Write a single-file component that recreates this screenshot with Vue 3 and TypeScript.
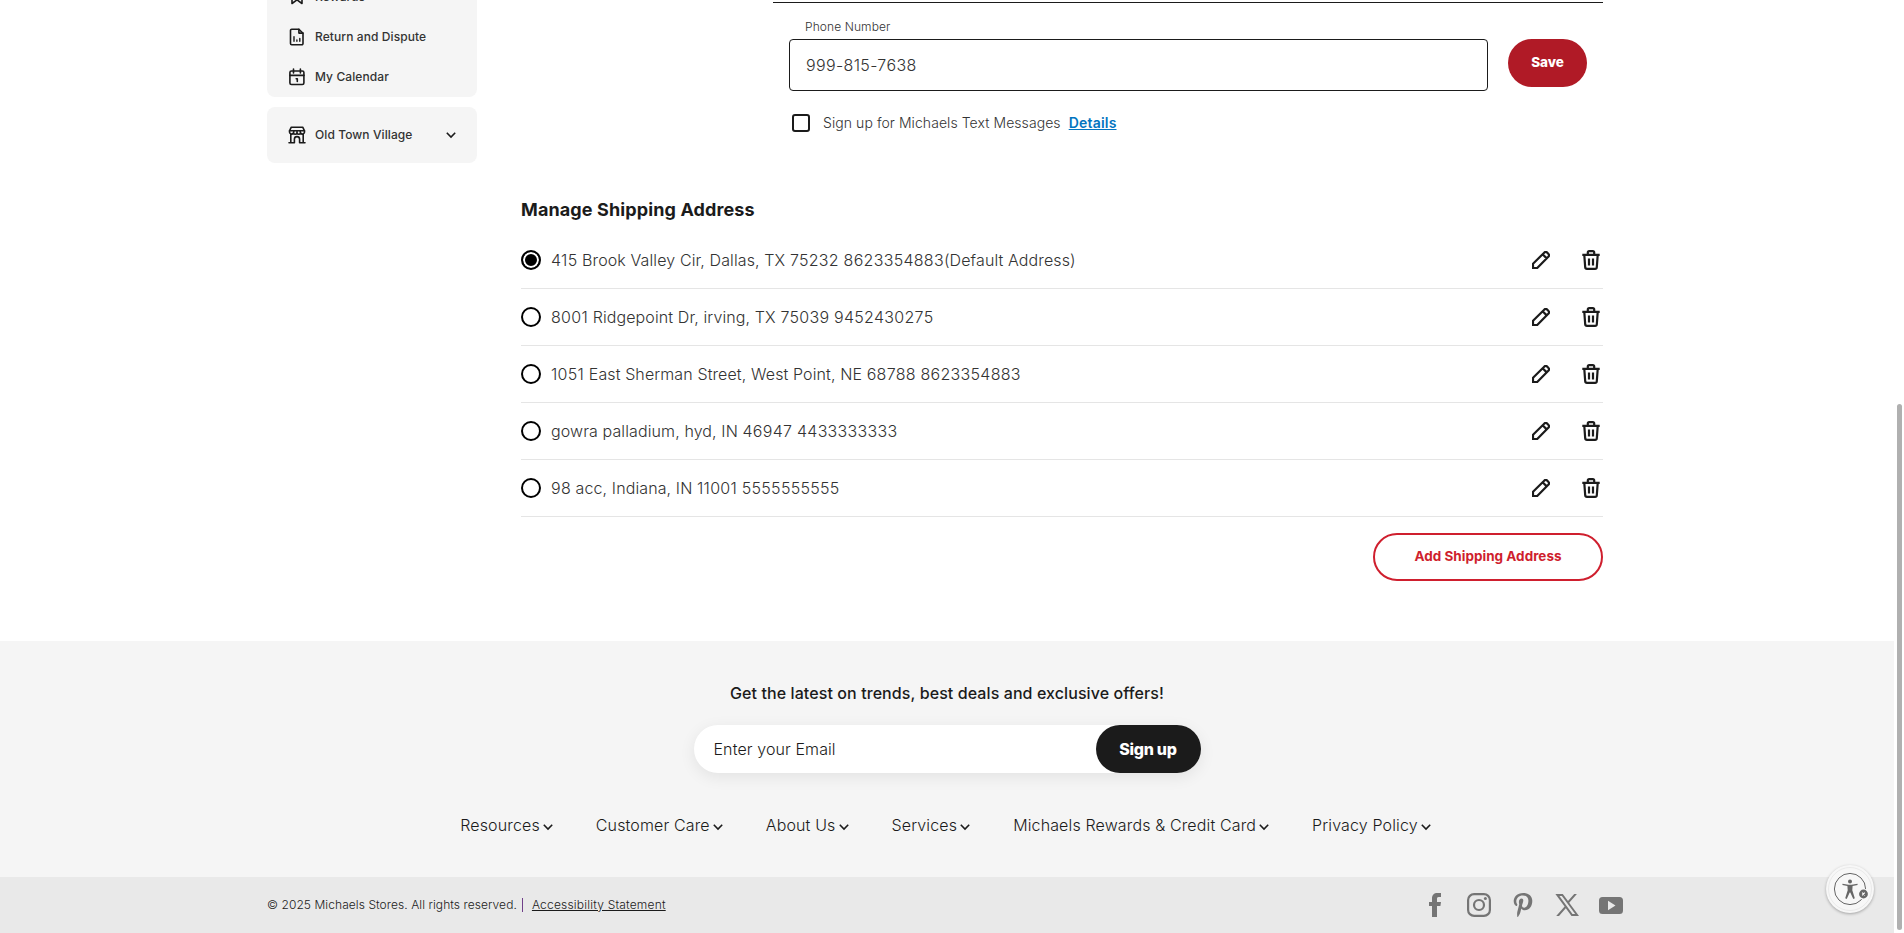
<script setup lang="ts">
import { ref } from 'vue'

interface Address { id: number; text: string }

const addresses: Address[] = [
  { id: 1, text: '415 Brook Valley Cir, Dallas, TX 75232 8623354883(Default Address)' },
  { id: 2, text: '8001 Ridgepoint Dr, irving, TX 75039 9452430275' },
  { id: 3, text: '1051 East Sherman Street, West Point, NE 68788 8623354883' },
  { id: 4, text: 'gowra palladium, hyd, IN 46947 4433333333' },
  { id: 5, text: '98 acc, Indiana, IN 11001 5555555555' },
]
// Digits are tracked slightly wider than letters.
const parts = (text: string): string[] => text.split(/(\d+)/).filter(Boolean)
const isNumber = (part: string): boolean => /^\d/.test(part)

const selected = ref<number>(1)
const phone = ref<string>('999-815-7638')
const email = ref<string>('')
const textMessages = ref<boolean>(false)
const footerLinks: string[] = [
  'Resources', 'Customer Care', 'About Us', 'Services', 'Michaels Rewards & Credit Card', 'Privacy Policy',
]
</script>

<template>
  <div class="window">
    <div class="page">
      <div class="content">
        <aside class="sidebar">
          <nav class="card menu">
            <a class="item">
              <svg class="icon" viewBox="0 0 18 18"><path d="M4 2.5h10v13l-5-3.6-5 3.6z" /></svg>
              <span>Rewards</span>
            </a>
            <a class="item">
              <svg class="icon" viewBox="0 0 18 18">
                <path d="M3.700 1.200h7.200l4.100 4v10.400a1.200 1.200 0 0 1-1.200 1.200H3.700a1.200 1.200 0 0 1-1.200-1.200V2.400a1.200 1.200 0 0 1 1.200-1.200z" />
                <path d="M10.900 1.400v3.700H15" />
                <path d="M6 8.800v4.400M8.900 13.200v-1.200M11.800 13.200v-2.700" class="fine" />
              </svg>
              <span>Return and Dispute</span>
            </a>
            <a class="item">
              <svg class="icon" viewBox="0 0 18 18">
                <rect x="1.900" y="3" width="14" height="13.500" rx="1.600" />
                <path d="M2 7.400h14M5.500 1v4M12.400 1v4M8.200 10.800h1.100v2.700" />
              </svg>
              <span>My Calendar</span>
            </a>
          </nav>
          <div class="card store">
            <svg class="icon" viewBox="0 0 18 18">
              <path d="M3.300 1.200h11.400l1.800 3.600v1.400a2.200 2.200 0 0 1-3.800 1.200 2.500 2.500 0 0 1-3.700 0 2.500 2.500 0 0 1-3.700 0A2.200 2.200 0 0 1 1.500 6.200V4.800z" />
              <path d="M1.600 4.800h14.800M6 4.800l-.6 2.400M12 4.800l.6 2.400M9 4.800v2.400M2.800 8v8.600M15.200 8v8.600M1 16.800h5.400v-3.600a2.600 2.600 0 0 1 5.200 0v3.600H17" />
            </svg>
            <span>Old Town Village</span>
            <svg class="chevron" viewBox="0 0 10 6"><path d="M.8.8 5 5 9.200.8" /></svg>
          </div>
        </aside>

        <main class="main">
          <section class="phone">
            <div class="field">
              <label class="label" for="phone">Phone Number</label>
              <input id="phone" v-model="phone" class="input" type="text">
              <div class="consent">
                <input v-model="textMessages" class="checkbox" type="checkbox" aria-label="Sign up">
                <span class="consent-text">Sign up for Michaels Text Messages</span>
                <a class="details">Details</a>
              </div>
            </div>
            <button class="save"><span>Save</span></button>
          </section>

          <section class="shipping">
            <h2 class="heading"><span>Manage Shipping Address</span></h2>
            <ul class="list">
              <li v-for="a in addresses" :key="a.id" class="row">
                <button class="radio" :class="{ on: selected === a.id }" :aria-label="a.text" @click="selected = a.id" />
                <span class="address"><span v-for="(p, i) in parts(a.text)" :key="i" :class="{ digits: isNumber(p) }">{{ p }}</span></span>
                <svg class="pencil" viewBox="0 0 18 18">
                  <path d="M1 17v-4.200L12.200 1.700a2.200 2.200 0 0 1 3.100 0l1 1a2.200 2.200 0 0 1 0 3.100L5.200 17zM10.600 3.300l4.100 4.100" />
                </svg>
                <svg class="trash" viewBox="0 0 18 20">
                  <path d="M.3 4.800h17.400M5.800 4.600V2.500a1.400 1.400 0 0 1 1.400-1.400h3.600a1.400 1.400 0 0 1 1.400 1.400v2.100M2.300 5l.9 12.200a1.800 1.800 0 0 0 1.800 1.700h8a1.800 1.800 0 0 0 1.800-1.700L15.700 5M7 8.500v7M11 8.500v7" />
                </svg>
              </li>
            </ul>
            <button class="add"><span>Add Shipping Address</span></button>
          </section>
        </main>
      </div>

      <footer class="footer">
        <p class="offer"><span>Get the latest on trends, best deals and exclusive offers!</span></p>
        <form class="signup" @submit.prevent>
          <input v-model="email" class="email" placeholder="Enter your Email">
          <button class="signup-button"><span>Sign up</span></button>
        </form>
        <nav class="links">
          <a v-for="l in footerLinks" :key="l" class="link">
            <span>{{ l }}</span>
            <svg class="chevron" viewBox="0 0 10 6"><path d="M.8.8 5 5 9.200.8" /></svg>
          </a>
        </nav>
        <div class="legal">
          <span class="copyright">© 2025 Michaels Stores. All rights reserved.</span>
          <i class="bar" />
          <a class="statement">Accessibility Statement</a>
          <div class="social">
            <svg viewBox="0 0 24 24"><path d="M9 24V13H6V9h3V5.600C9 2 11 0 14.400 0H18v4h-2.300C14.300 4 14 4.800 14 6v3h4l-.6 4H14v11z" /></svg>
            <svg viewBox="0 0 24 24">
              <rect class="line" x="1.100" y="1.100" width="21.800" height="21.800" rx="6" />
              <circle class="line" cx="12" cy="12" r="5" /><circle cx="18.400" cy="5.600" r="1.500" />
            </svg>
            <svg viewBox="0 0 24 24"><path d="M12.300 0C6 0 2.700 4.300 2.700 8.100c0 2.200.8 4.200 2.600 4.900.3.100.6 0 .7-.3l.3-1c.1-.3 0-.5-.2-.7-.5-.6-.8-1.400-.8-2.500C5.300 5.200 7.800 2.500 11.900 2.500c3.600 0 5.500 2.200 5.500 5.100 0 3.900-1.700 7.100-4.200 7.100-1.400 0-2.500-1.200-2.100-2.600.4-1.700 1.200-3.500 1.200-4.700 0-1.100-.6-2-1.800-2-1.400 0-2.600 1.500-2.600 3.500 0 1.300.4 2.100.4 2.100l-1.900 7.600c-.6 2.300-.1 5.100 0 5.400 0 .2.200.2.300.1.200-.2 2-2.500 2.600-4.700l1-4c.5 1 2 1.800 3.500 1.800 4.600 0 7.500-4.100 7.500-9.500C21.300 3.300 17.700 0 12.300 0z" /></svg>
            <svg viewBox="0 0 24 24">
              <path fill-rule="evenodd" d="M.4 1h7.400l5.200 7L19.200 1h2.700l-7.700 8.800L24 23h-7.500l-5.700-7.700L4 23H1.200l8.400-9.500zm4 1.900L17.500 21h2.700L6.900 2.900z" />
            </svg>
            <svg viewBox="0 0 24 24"><path fill-rule="evenodd" d="M3.500 4h17A3.500 3.500 0 0 1 24 7.500v10a3.500 3.500 0 0 1-3.500 3.500h-17A3.500 3.500 0 0 1 0 17.500v-10A3.500 3.500 0 0 1 3.500 4zM9 7.800v9.400l7.500-4.700z" /></svg>
          </div>
        </div>
      </footer>
    </div>

    <div class="scrollbar"><div class="thumb" /></div>

    <button class="access" aria-label="Accessibility">
      <svg viewBox="0 0 48 48">
        <circle cx="24" cy="24" r="21.500" class="halo" />
        <circle cx="24" cy="24" r="15.600" class="ring" />
        <circle cx="24" cy="16.500" r="2" class="solid" />
        <path class="solid" d="M16.500 18.800 22.500 19.700h3l6-.9.1 1.100-5 1.200-.3 4.200 2.500 8-1.500.6L24.300 27.500h-.6L20.700 33.900l-1.500-.6 2.500-8-.3-4.200-5-1.200z" />
        <circle cx="37.500" cy="29" r="5.500" class="gap" />
        <circle cx="37.500" cy="29" r="4.400" class="solid" />
        <path class="cross" d="m36.200 27.700 2.600 2.600m0-2.600-2.600 2.600" />
      </svg>
    </button>
  </div>
</template>

<style>
html, body { margin: 0; overflow: hidden; }
</style>

<style scoped>
.window {
  position: relative;
  display: flex;
  width: 1904px;
  height: 933px;
  overflow: hidden;
  background: #fff;
  color: #1b1b1b;
  font-family: Inter, "Liberation Sans", sans-serif;
  font-size: 16px;
  font-weight: 300;
}
.window * { box-sizing: border-box; }
button, input { font-family: inherit; }
button { border: 0; padding: 0; cursor: pointer; }
.page { width: 1894px; height: 933px; overflow: hidden; display: flex; flex-direction: column; }
.content { display: flex; height: 641px; flex: none; padding: 0 291px 0 267px; }
.sidebar { width: 210px; margin: -23px 44px 0 0; flex: none; }
.card { background: #f5f5f5; border-radius: 8px; }
.menu { height: 120px; display: flex; flex-direction: column; }
.item { height: 40px; display: flex; align-items: center; gap: 9px; padding-left: 21px; }
.item, .store { font-size: 12px; line-height: 18px; font-weight: 500; color: #333; letter-spacing: .09px; }
.store { height: 56px; margin-top: 10px; padding: 0 21px; display: flex; align-items: center; gap: 9px; }
.store .chevron { margin-left: auto; }
.icon { width: 18px; height: 18px; fill: none; stroke: #1b1b1b; stroke-width: 1.6; stroke-linejoin: round; stroke-linecap: round; }
.fine { stroke-width: 1.4; }
.chevron { width: 10px; height: 6px; fill: none; stroke: #1b1b1b; stroke-width: 1.6; overflow: visible; }
.main { flex: 1; display: flex; flex-direction: column; }
.phone { height: 196px; margin: 2px 0 0 252px; border-top: 1px solid #1b1b1b; display: flex; padding: 0 16px; gap: 20px; }
.field { width: 699px; }
.label { display: block; height: 36px; padding: 15px 0 0 16px; font-size: 12px; line-height: 18px; font-weight: 300; color: #333; letter-spacing: .1px; }
.input { display: block; width: 100%; height: 52px; border: 1px solid #1b1b1b; border-radius: 4px; padding: 0 16px; font-size: 16px; font-weight: 300; letter-spacing: .35px; color: #333; outline: 0; }
.consent { display: flex; align-items: center; height: 18px; margin: 23px 0 0 3px; font-size: 14px; line-height: 20px; letter-spacing: .07px; }
.checkbox { appearance: none; width: 18px; height: 18px; margin: 0 13px 0 0; border: 2px solid #1b1b1b; border-radius: 3px; background: #fff; }
.consent-text { color: #333; }
.details { margin-left: 8px; color: #0274c0; font-weight: 600; letter-spacing: .2px; text-decoration: underline; }
.save { width: 79px; height: 48px; margin-top: 36px; padding-bottom: 2px; border-radius: 24px; background: #b01a26; color: #fff; font-size: 13.500px; font-weight: 800; letter-spacing: -.1px; }
.heading { height: 34px; margin: 0; font-size: 18px; line-height: 24px; font-weight: 700; letter-spacing: .12px; }
.list { list-style: none; margin: 0; padding: 0; }
.row { height: 57px; display: flex; align-items: center; border-bottom: 1px solid #e5e5e5; padding-right: 3px; }
.radio { width: 20px; height: 20px; border: 2px solid #000; border-radius: 50%; background: #fff; margin-right: 10px; }
.radio.on { background: #000; box-shadow: inset 0 0 0 2px #fff; }
.address { color: #333; white-space: pre; letter-spacing: .11px; }
.digits { letter-spacing: .29px; }
.pencil { width: 18px; height: 18px; margin-left: auto; }
.trash { width: 18px; height: 20px; margin-left: 32px; }
.pencil, .trash { fill: none; stroke: #1b1b1b; stroke-width: 2.200; }
.shipping { display: flex; flex-direction: column; }
.add { align-self: flex-end; width: 230px; height: 48px; margin-top: 16px; padding-bottom: 2px; border: 2px solid #cf1f2e; border-radius: 24px; background: #fff; color: #cf1f2e; font-size: 13.500px; font-weight: 700; letter-spacing: .02px; }
.footer { height: 292px; background: #f5f5f5; display: flex; flex-direction: column; align-items: center; }
.offer { height: 44px; margin: 40px 0 0; font-size: 16px; line-height: 24px; font-weight: 500; letter-spacing: .09px; }
.signup { width: 507px; height: 48px; flex: none; display: flex; border-radius: 24px; background: #fff; box-shadow: 0 4px 16px rgb(0 0 0 / 8%); }
.email { flex: 1; min-width: 0; border: 0; background: none; padding: 0 20px; font-size: 16px; font-weight: 300; letter-spacing: .1px; outline: 0; }
.email::placeholder { color: #1b1b1b; }
.signup-button { width: 105px; padding-bottom: 1px; border-radius: 24px; background: #1b1b1b; color: #fff; font-size: 16px; font-weight: 800; letter-spacing: -.3px; }
.links { height: 24px; margin: 40px 3px 0 0; display: flex; gap: 43px; }
.link { display: flex; align-items: center; gap: 3px; line-height: 24px; letter-spacing: .14px; }
.link .chevron { margin-top: 3px; }
.legal { width: 100%; height: 56px; margin-top: auto; padding: 0 271px 0 267px; background: #e9e9e9; display: flex; align-items: center; font-size: 12px; }
.copyright { padding-bottom: 2px; letter-spacing: .07px; }
.bar { width: 1px; height: 14px; margin: 0 9px 0 5px; background: #70408a; }
.statement { padding-bottom: 2px; letter-spacing: .19px; text-decoration: underline; }
.social { margin-left: auto; display: flex; gap: 20px; }
.social svg { width: 24px; height: 24px; fill: #757575; }
.social .line { fill: none; stroke: #757575; stroke-width: 2.200; }
.scrollbar { width: 10px; padding: 404px 2px 0 3px; background: #fff; }
.thumb { height: 526px; border-radius: 3px; background: #b0b0b0; }
.access { position: absolute; left: 1826px; top: 865px; width: 48px; height: 48px; border-radius: 50%; background: #f7f7f7; box-shadow: 0 1px 3px rgb(0 0 0 / 30%); }
.access svg { display: block; width: 48px; height: 48px; }
.halo { fill: none; stroke: #e4e4e4; stroke-width: .7; }
.ring { fill: none; stroke: #666; stroke-width: 1; }
.solid { fill: #666; }
.gap { fill: #f7f7f7; }
.cross { stroke: #fff; stroke-width: 1.200; }
</style>
